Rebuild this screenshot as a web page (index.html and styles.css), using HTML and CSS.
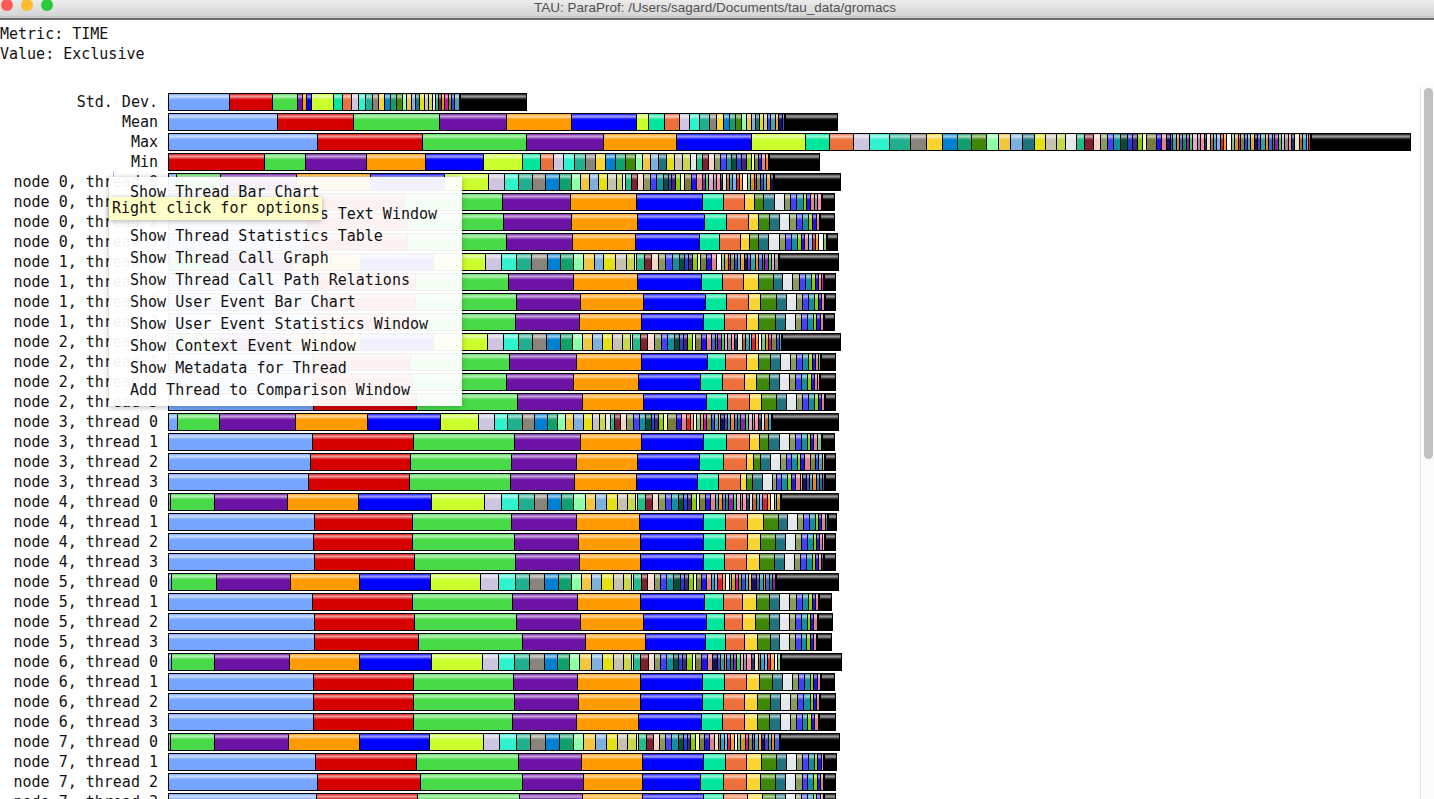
FILE: index.html
```html
<!DOCTYPE html>
<html lang="en">
<head>
<meta charset="utf-8">
<title>TAU: ParaProf</title>
<link rel="stylesheet" href="styles.css">
</head>
<body>
<div class="window">
  <header class="titlebar">
    <div class="lights">
      <span class="light light-red"></span>
      <span class="light light-yellow"></span>
      <span class="light light-green"></span>
    </div>
    <div class="title">TAU: ParaProf: /Users/sagard/Documents/tau_data/gromacs</div>
  </header>
  <main class="content">
    <div class="meta">
      <div>Metric: TIME</div>
      <div>Value: Exclusive</div>
    </div>
    <div class="rows" id="rows"></div>
  </main>
  <div class="scrollbar"><div class="thumb"></div></div>
  <div class="tick"></div>
  <ul class="menu">
    <li>Show Thread Bar Chart</li>
    <li>Show Thread Statistics Text Window</li>
    <li>Show Thread Statistics Table</li>
    <li>Show Thread Call Graph</li>
    <li>Show Thread Call Path Relations</li>
    <li>Show User Event Bar Chart</li>
    <li>Show User Event Statistics Window</li>
    <li>Show Context Event Window</li>
    <li>Show Metadata for Thread</li>
    <li>Add Thread to Comparison Window</li>
  </ul>
  <div class="tooltip">Right click for options</div>
</div>
<script src="script.js"></script>
</body>
</html>
```
FILE: styles.css
```css
* { box-sizing: border-box; }
html, body { margin: 0; padding: 0; background: #fff; }
.window {
  position: relative;
  width: 1434px;
  height: 799px;
  overflow: hidden;
  font-family: "DejaVu Sans Mono", "Liberation Mono", monospace;
  font-size: 15px;
  color: #111;
}
.titlebar {
  display: grid;
  grid-template-columns: 1fr auto 1fr;
  align-items: start;
  height: 20px;
  padding-right: 4px;
  background: linear-gradient(#ececec, #d4d4d4 16px, #c9c9c9 16px, #c9c9c9 18px, #6e6e6e 18px, #6e6e6e 20px);
}
.lights { display: flex; gap: 8px; padding-left: 1px; margin-top: -1px; }
.light { width: 12px; height: 12px; border-radius: 50%; }
.light-red { background: #fc5b57; }
.light-yellow { background: #fdbc2e; }
.light-green { background: #2cc83f; }
.title {
  font-family: "Liberation Sans", Arial, sans-serif;
  font-size: 13.5px;
  line-height: 15px;
  color: #505050;
}
.content { padding-top: 4px; }
.meta { line-height: 20px; margin-bottom: 29px; }
.rows { display: flex; flex-direction: column; gap: 2px; }
.row { display: flex; align-items: center; height: 18px; flex: none; }
.label { width: 158px; margin-right: 10px; text-align: right; line-height: 18px; white-space: nowrap; }
.bar { display: flex; height: 18px; border: 1px solid #000; background: #000; flex: none; }
.seg {
  flex: none;
  height: 16px;
  border-right: 1px solid #000;
  background-image: linear-gradient(rgba(255,255,255,.12) 0, rgba(255,255,255,.3) 1px, rgba(255,255,255,.58) 2px, rgba(255,255,255,.58) 3px, rgba(255,255,255,.2) 4.5px, rgba(255,255,255,.06) 5.5px, rgba(255,255,255,0) 6.5px);
}
.seg-black { border-right: 0; border-left: 1px solid #000; }
.scrollbar {
  position: absolute;
  top: 87px;
  right: 0;
  bottom: 0;
  width: 14px;
  padding: 1px 1px 0 3px;
  background: #fbfbfb;
  border-left: 1px solid #e6e6e6;
}
.thumb { width: 9px; height: 371px; border-radius: 5px; background: #c1c1c1; }
.tick { position: absolute; left: 113px; top: 171px; width: 1px; height: 6px; background: #a9c1e2; }
.menu {
  position: absolute;
  left: 109px;
  top: 177px;
  width: 353px;
  height: 229px;
  margin: 0;
  padding: 4px 0 0 21px;
  list-style: none;
  line-height: 22px;
  white-space: nowrap;
  background: rgba(255,255,255,.95);
  box-shadow: 0 1px 6px rgba(0,0,0,.28);
}
.tooltip {
  position: absolute;
  left: 109px;
  top: 197px;
  width: 213px;
  height: 23px;
  padding-left: 3px;
  line-height: 22px;
  white-space: nowrap;
  background: #fffec8;
  box-shadow: 0 1px 5px rgba(0,0,0,.3);
}
```
FILE: script.js
```js
var P = {
  lt:'#76a5ff', red:'#d70000', grn:'#47dc47', pur:'#6c12a4', org:'#ff9a00', blu:'#0000ff',
  lime:'#ccff2e', spring:'#00e69c', coral:'#ec703c', lilac:'#cec5e0', aqua:'#2ef3cf', teal:'#20af8f',
  gray:'#89847a', gold:'#fbd52f', azure:'#0080d0', seagrn:'#0fa06c', dkgrn:'#3f8707', mint:'#8fffa5',
  amber:'#f4c640', ltb:'#7dafdf', dkteal:'#1e737f', yellow:'#e5e010', beige:'#c7c2b0', khaki:'#c8d84a',
  white:'#e4e8ec', sea:'#20bd8a', maroon:'#80202f', pink:'#f5d5c8', olive:'#8a9a5a', indigo:'#4040ff',
  tealb:'#10909c', dkg2:'#0a4c3a', blue2:'#2040d0', pur2:'#402080', lime2:'#88cc00', paley:'#f0ffa0',
  olive2:'#7a7a3c', blue3:'#2010f0', rose:'#e08088'
};
var STRIPES = ['#c99a20','#d010a0','#808040','#2050e0','#50a0b0','#f0a030','#101060','#5040c0','#30a0a0',
  '#f08020','#4060d0','#208060','#9020b0','#30d050','#e8a0d0','#909090','#ff88aa','#203060','#e0e0d0',
  '#c06020','#30a0c0','#70b0ff','#e02020','#ffa020','#f8f8f0','#80c080'];
var STRIPE_W = [3,4,3,3,5,3,4,2,4,3];

var SEQ = {
  A: 'lt grn pur org blu lime lilac aqua teal gray azure seagrn mint amber ltb yellow beige khaki white sea maroon pink olive indigo tealb dkg2 blue2 pur2 lime2 paley olive2 blue3 rose'.split(' '),
  B: 'lt red grn pur org blu spring coral gold dkgrn dkteal white olive indigo tealb lime2 blue3 rose'.split(' '),
  C: 'lt red grn pur org blu lime spring coral lilac aqua teal gray gold azure seagrn dkgrn mint amber ltb dkteal yellow beige khaki white sea maroon pink olive indigo tealb dkg2 blue2 pur2 lime2 paley olive2 blue3 rose'.split(' '),
  M: 'red grn pur org blu lime spring coral lilac aqua teal gray gold azure seagrn dkgrn mint amber ltb dkteal yellow beige khaki white sea maroon pink olive indigo tealb dkg2 blue2 pur2 lime2 paley olive2 blue3 rose'.split(' ')
};

/* label, colour sequence, right edges of the segments, start of the black tail, end of the bar */
var ROWS = [
  ['Std. Dev.','C',[229,272,297,302,306,311,333,342,351,358,365,372,378,384,390,396,402,406,411,415,419,424,428,432,435,438,441],461,527],
  ['Mean','C',[277,353,439,506,571,636,648,664,679,689,699,709,716,723,729,735,741,746,751,755,759,763,767],786,838],
  ['Max','C',[317,422,526,603,676,751,805,829,853,869,889,910,926,942,957,971,986,998,1010,1022,1034,1045,1056,1065,1076,1084,1093,1100,1107,1113,1120,1127,1132,1137,1142,1146,1156,1161,1166],1311,1411],
  ['Min','M',[264,305,366,425,483,522,540,553,563,574,585,595,605,615,625,635,642,650,658,666,674,682,690,696,702,708,714,720,726,731,736,741,746,751,754,758,761,765],770,820],
  ['node 0, thread 0','A',[176,220,296,370,444,488,504,518,532,545,559,571,580,589,598,607,616,622,625,631,637,643,650,656,663,668,671,675,680,684,691,696,702],774,841],
  ['node 0, thread 1','B',[305,404,502,570,636,702,723,744,754,763,774,784,790,796,803,806,810,814],822,835],
  ['node 0, thread 2','B',[307,407,503,571,637,704,726,748,758,769,779,789,796,802,808,812,816,819],820,835],
  ['node 0, thread 3','B',[305,407,506,572,635,699,719,740,749,758,768,779,785,791,797,801,804,808],827,838],
  ['node 1, thread 0','A',[170,218,292,360,433,485,501,516,531,547,560,573,583,594,603,615,626,634,636,644,651,658,665,672,679,684,688,692,697,700,706,711,716],779,839],
  ['node 1, thread 1','B',[315,415,508,573,637,701,722,743,758,773,782,792,799,805,811,815,818,821],824,836],
  ['node 1, thread 2','B',[316,415,516,580,643,705,726,748,760,776,786,796,802,808,814,818,821,824],826,836],
  ['node 1, thread 3','B',[316,415,515,579,641,703,724,746,758,775,785,795,801,807,813,816,820,823],825,835],
  ['node 2, thread 0','A',[172,215,290,360,433,487,503,518,532,546,560,572,582,592,602,612,622,630,632,640,647,654,661,667,674,679,683,687,692,695,701,706,711],782,841],
  ['node 2, thread 1','B',[312,410,509,576,641,707,725,746,758,770,780,790,796,802,808,812,815,818],821,836],
  ['node 2, thread 2','B',[312,412,506,573,638,700,722,744,756,769,779,789,795,801,807,811,814,817],820,836],
  ['node 2, thread 3','B',[313,416,517,582,643,706,727,749,761,776,786,796,802,808,814,818,821,824],826,836],
  ['node 3, thread 0','A',[177,219,295,367,440,478,494,507,522,534,547,557,565,573,583,592,599,605,610,614,620,626,633,639,645,651,654,658,663,667,676,681,686],772,839],
  ['node 3, thread 1','B',[312,413,514,580,641,703,726,749,759,768,779,789,795,801,807,810,813,817],823,835],
  ['node 3, thread 2','B',[310,410,511,576,637,699,723,746,753,760,770,780,786,791,797,800,804,810],825,836],
  ['node 3, thread 3','B',[308,409,510,574,636,697,718,740,746,752,762,772,776,781,787,791,795,800],825,836],
  ['node 4, thread 0','A',[170,214,287,358,431,484,501,518,534,547,561,573,585,595,606,617,627,635,637,645,652,658,665,671,678,683,687,691,696,699,705,710,715],781,839],
  ['node 4, thread 1','B',[314,412,511,576,639,703,725,747,763,778,787,797,803,809,815,818,821,825],828,837],
  ['node 4, thread 2','B',[313,412,514,578,640,703,725,747,760,775,785,795,801,807,813,816,819,822],825,836],
  ['node 4, thread 3','B',[314,414,515,579,640,703,724,746,759,774,784,794,800,806,812,815,818,821],824,836],
  ['node 5, thread 0','A',[171,216,290,359,430,480,498,515,529,544,558,571,581,591,601,613,623,631,633,641,647,654,660,666,673,680,684,688,693,696,701,706,711],777,839],
  ['node 5, thread 1','B',[312,412,512,577,640,704,723,742,756,769,779,789,796,802,808,812,815,818],818,832],
  ['node 5, thread 2','B',[314,414,516,580,643,706,724,742,755,769,779,789,795,801,807,810,813,817],817,833],
  ['node 5, thread 3','B',[314,418,522,585,645,705,725,744,757,770,779,789,795,801,806,810,813,816],816,832],
  ['node 6, thread 0','A',[171,214,289,359,431,482,498,514,529,544,557,569,579,591,602,613,623,631,633,640,648,654,660,666,673,678,682,686,692,695,701,707,712],782,842],
  ['node 6, thread 1','B',[313,413,513,577,640,702,724,746,759,772,782,792,798,804,810,813,817,820],820,835],
  ['node 6, thread 2','B',[313,413,514,578,640,702,723,744,757,770,780,790,797,803,810,813,816,819],819,836],
  ['node 6, thread 3','B',[313,413,512,576,638,701,722,744,757,769,780,790,796,802,807,811,814,818],818,836],
  ['node 7, thread 0','A',[170,214,288,359,429,483,499,516,530,545,559,573,583,595,606,617,627,636,638,646,653,659,665,671,678,683,687,690,695,699,704,709,714],780,840],
  ['node 7, thread 1','B',[315,416,518,581,642,703,725,746,761,776,786,796,802,808,814,817,821,823],823,837],
  ['node 7, thread 2','B',[317,420,522,583,642,700,723,746,760,775,785,795,802,807,813,817,820,823],823,836],
  ['node 7, thread 3','B',[316,417,519,582,642,703,723,747,762,775,785,795,801,807,813,816,820,823],823,836]
];

function seg(width, colour, cls) {
  var s = document.createElement('span');
  s.className = cls || 'seg';
  s.style.width = width + 'px';
  s.style.backgroundColor = colour;
  return s;
}

var host = document.getElementById('rows');
ROWS.forEach(function (r, ri) {
  var row = document.createElement('div');
  row.className = 'row';
  var label = document.createElement('div');
  label.className = 'label';
  label.textContent = r[0];
  row.appendChild(label);

  var bar = document.createElement('div');
  bar.className = 'bar';
  var BAR_X = 169;
  bar.style.width = (r[4] - 168) + 'px';

  var names = SEQ[r[1]], x = BAR_X;
  r[2].forEach(function (edge, i) {
    bar.appendChild(seg(edge + 1 - x, P[names[i]]));
    x = edge + 1;
  });
  var k = ri * 3, stop = r[3];
  while (stop - x >= 2) {
    var w = Math.min(STRIPE_W[k % STRIPE_W.length], stop - x);
    bar.appendChild(seg(w, STRIPES[k % STRIPES.length]));
    x += w;
    k++;
  }
  bar.appendChild(seg(r[4] - 1 - x, '#000', 'seg seg-black'));
  row.appendChild(bar);
  host.appendChild(row);
});
```
